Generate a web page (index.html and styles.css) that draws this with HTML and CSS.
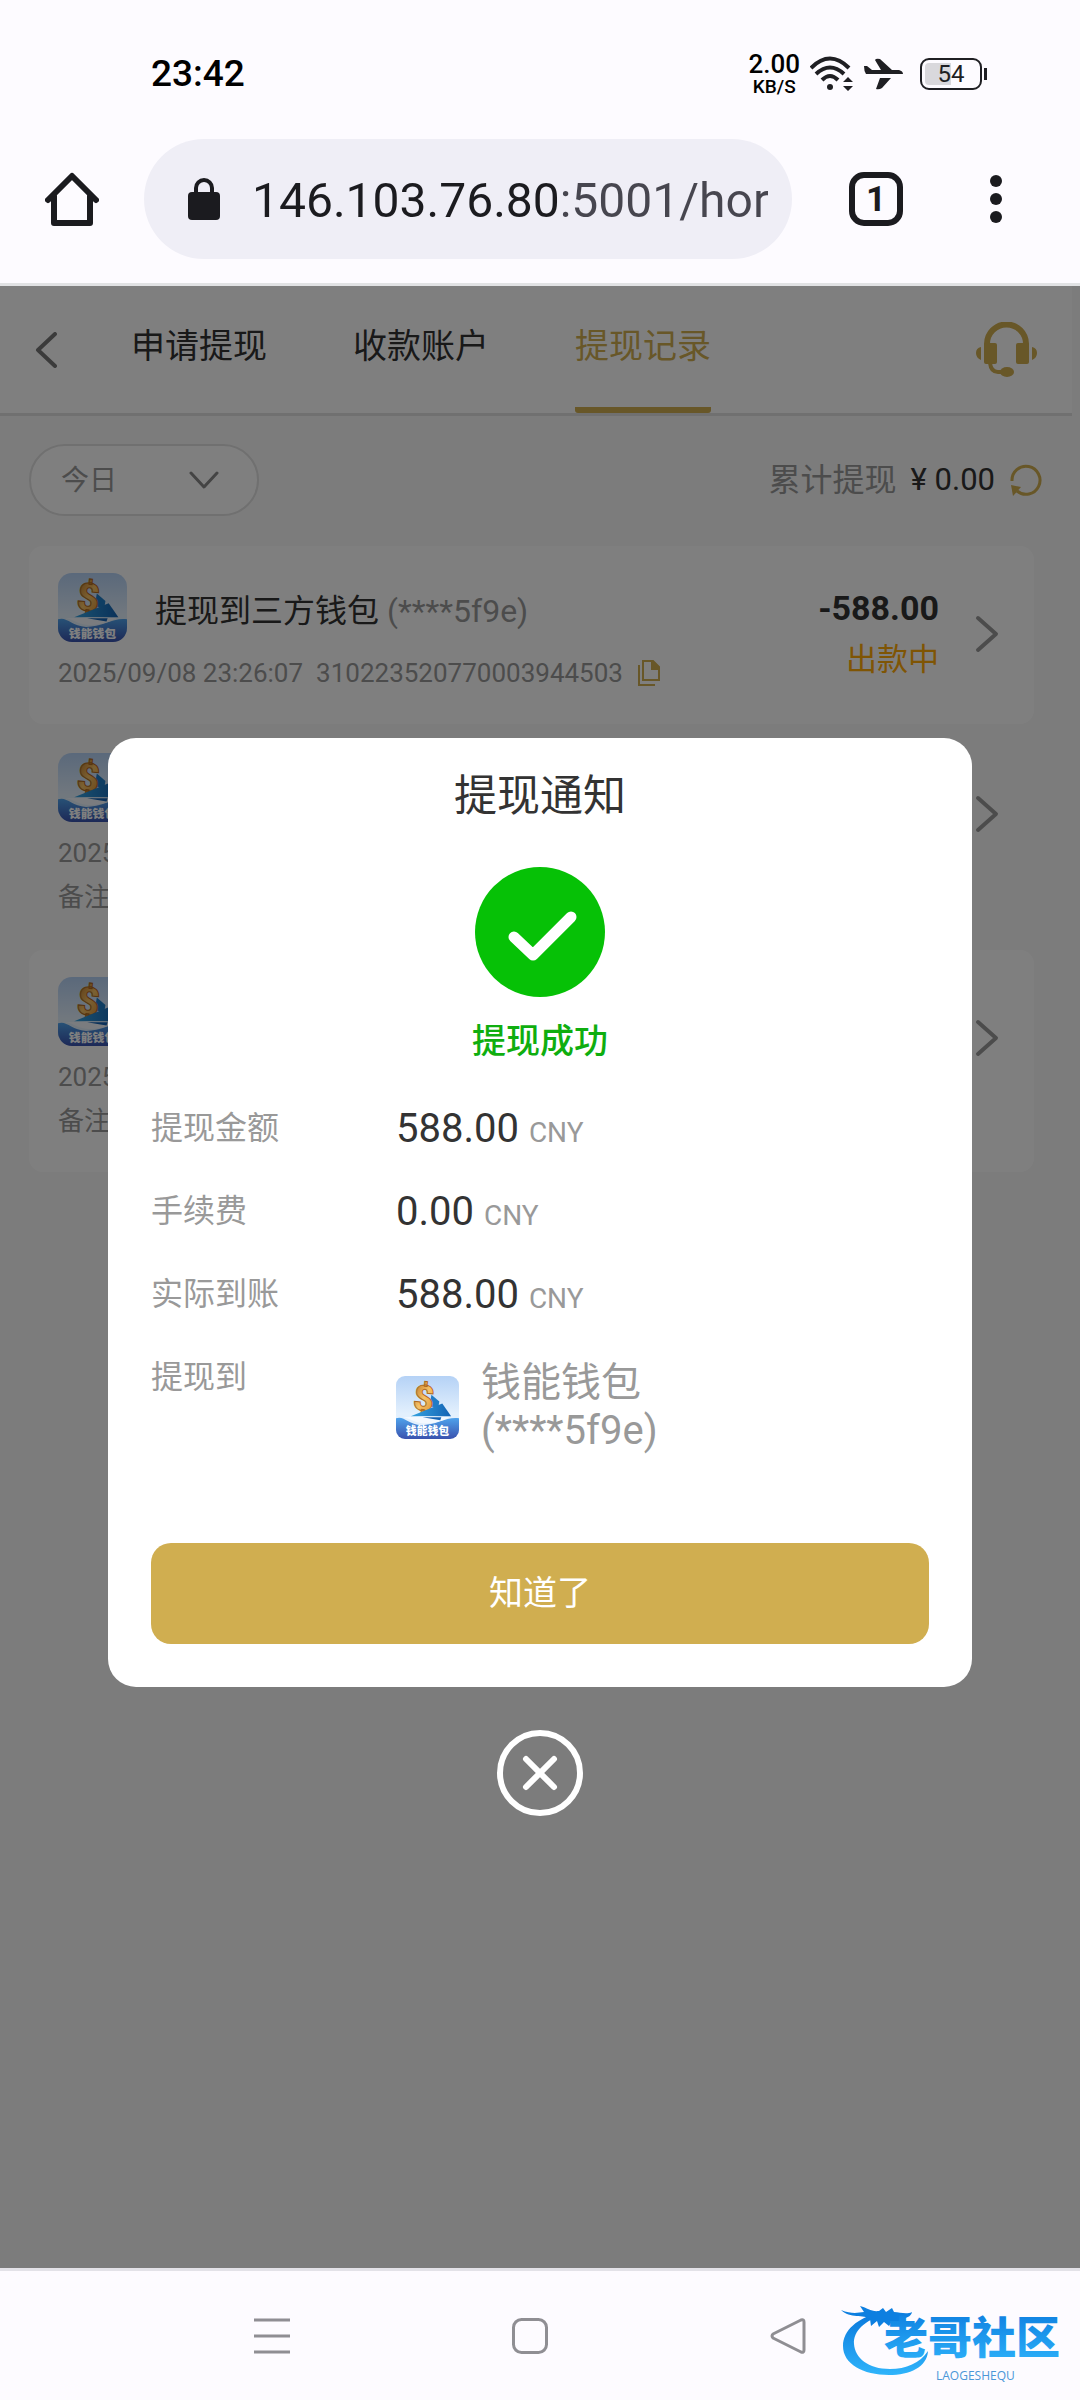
FILE: index.html
```html
<!DOCTYPE html>
<html lang="zh-CN">
<head>
  <meta charset="UTF-8" />
  <meta name="viewport" content="width=device-width, initial-scale=1" />
  <title>提现记录</title>
  <link rel="stylesheet" href="styles.css">
</head>

<body>

  <!-- Shared symbols -->
  <svg class="symbols" width="0" height="0" aria-hidden="true">
    <defs>
      <linearGradient id="skyFill" x1="0" y1="0" x2="0" y2="1">
        <stop offset="0" stop-color="#b5d2f6" />
        <stop offset="0.6" stop-color="#e3f0fd" />
      </linearGradient>
      <linearGradient id="waveFill" x1="0" y1="0" x2="0" y2="1">
        <stop offset="0" stop-color="#4fa3ec" />
        <stop offset="1" stop-color="#3a52ae" />
      </linearGradient>
      <linearGradient id="goldFill" x1="0" y1="0" x2="1" y2="1">
        <stop offset="0" stop-color="#b5691c" />
        <stop offset="0.5" stop-color="#f6c266" />
        <stop offset="1" stop-color="#d8892c" />
      </linearGradient>
      <linearGradient id="sailFill" x1="0" y1="0" x2="1" y2="0">
        <stop offset="0" stop-color="#35a3e0" />
        <stop offset="1" stop-color="#1463b4" />
      </linearGradient>
      <linearGradient id="logoFill" x1="0" y1="0" x2="0" y2="1">
        <stop offset="0" stop-color="#0a78dc" />
        <stop offset="1" stop-color="#2fb4fb" />
      </linearGradient>
    </defs>
    <symbol id="walletSky" viewBox="0 0 64 64">
      <path d="M0 0h64v64H0z" fill="url(#skyFill)" />
      <path d="M36 19l8 7-1 6-9-1z" fill="#1f7cc6" />
    </symbol>
    <symbol id="walletSea" viewBox="0 0 64 64">
      <path d="M15 41l32-13 9 13z" fill="url(#sailFill)" />
      <path d="M0 43c8-3 12 6 26 7 15 0 26-9 38-7v21H0z" fill="url(#waveFill)" />
      <path d="M7 42c18-1 36-1 47 0-9 5-18 7-28 6-8-1-12-5-19-6z" fill="#f4f9ff" />
      <path d="M27 42h19l-1 3z" fill="#1463b4" />
    </symbol>
    <symbol id="chevronRight" viewBox="0 0 24 38">
      <path d="M3 3l18 16L3 35" fill="none" stroke="currentColor" stroke-width="4" stroke-linecap="round" stroke-linejoin="round" />
    </symbol>
  </svg>

  <!-- Status Bar -->
  <div class="status-bar">
    <span class="clock">23:42</span>
    <div class="status-icons">
      <div class="speed"><span class="rate">2.00</span><span class="rate-unit">KB/S</span></div>
      <svg class="wifi" viewBox="0 0 44 36" width="44" height="36">
        <g fill="none" stroke="#1f1f23" stroke-width="4">
          <path d="M1 12Q20-7 39 12" />
          <path d="M6 18Q20 5 34 18" />
          <path d="M12 24Q20 16 28 24" />
        </g>
        <circle cx="20" cy="31" r="3" fill="#1f1f23" />
        <path d="M33 26l5-5 5 5zM33 30l5 5 5-5z" fill="#1f1f23" />
      </svg>
      <svg class="plane" viewBox="0 0 40 32" width="40" height="32">
        <path d="M0 8h3l5 4h9L11 2q1-2 5-1l12 11h7q4 1 4 4H2q-2-3-2-8zM16 20h11l-9 10q-3 2-6 1z" fill="#1f1f23" />
      </svg>
      <div class="battery"><span>54</span></div>
    </div>
  </div>

  <!-- Browser Toolbar -->
  <header class="toolbar">
    <button class="tool" type="button" aria-label="主页">
      <svg viewBox="0 0 54 54" width="54" height="54">
        <path d="M3 28L27 4l24 24M9 24v27h36V24" fill="none" stroke="#1b1b1f" stroke-width="6" stroke-linecap="round" stroke-linejoin="round" />
      </svg>
    </button>
    <label class="address">
      <svg viewBox="0 0 32 42" width="32" height="42" aria-hidden="true">
        <path d="M8 16v-6a8 8 0 0 1 16 0v6" fill="none" stroke="#1b1b1f" stroke-width="4" />
        <rect y="14" width="32" height="28" rx="4" fill="#1b1b1f" />
      </svg>
      <input class="url" type="text" value="146.103.76.80:5001/hor" aria-label="网址" />
    </label>
    <button class="tab-count" type="button" aria-label="标签页">1</button>
    <button class="tool more" type="button" aria-label="更多">
      <svg viewBox="0 0 12 48" width="12" height="48">
        <g fill="#1b1b1f"><circle cx="6" cy="6" r="6" /><circle cx="6" cy="24" r="6" /><circle cx="6" cy="42" r="6" /></g>
      </svg>
    </button>
  </header>

  <main class="page">

    <!-- Tabs -->
    <nav class="tabs">
      <a class="back" href="#" aria-label="返回">
        <svg viewBox="0 0 22 36" width="22" height="36">
          <path d="M20 2L3 18l17 16" fill="none" stroke="#777" stroke-width="4" stroke-linecap="round" stroke-linejoin="round" />
        </svg>
      </a>
      <a class="tab" href="#">申请提现</a>
      <a class="tab" href="#">收款账户</a>
      <a class="tab active" href="#">提现记录</a>
      <a class="service" href="#" aria-label="客服">
        <svg viewBox="0 0 62 56" width="62" height="56">
          <path d="M11 24v-2a19 19 0 0 1 39 0v2" fill="none" stroke="#d0ae50" stroke-width="6" />
          <rect x="8" y="21" width="13" height="21" rx="2" fill="#d0ae50" />
          <rect x="40" y="21" width="13" height="21" rx="2" fill="#d0ae50" />
          <path d="M5 25v13Q0 36 0 31t5-6zM56 25v13q5-2 5-7t-5-6z" fill="#d0ae50" />
          <path d="M14 41q1 9 8 9h8" fill="none" stroke="#d0ae50" stroke-width="4" />
          <ellipse cx="31" cy="50" rx="7" ry="5" fill="#d0ae50" />
        </svg>
      </a>
    </nav>

    <!-- Filter -->
    <div class="filter">
      <div class="picker">
        <select aria-label="日期"><option>今日</option></select>
        <svg viewBox="0 0 30 20" width="30" height="20" aria-hidden="true">
          <path d="M2 3l13 14L28 3" fill="none" stroke="#888" stroke-width="3" stroke-linecap="round" stroke-linejoin="round" />
        </svg>
      </div>
      <div class="total">
        <span class="total-label">累计提现</span>
        <span class="total-value">¥ 0.00</span>
        <button class="refresh" type="button" aria-label="刷新">
          <svg viewBox="0 0 32 32" width="32" height="32">
            <path d="M2 17A14 14 0 1 1 7 27" fill="none" stroke="#d0ae50" stroke-width="3" />
            <path d="M1 21l10 2-8 9z" fill="#d0ae50" />
          </svg>
        </button>
      </div>
    </div>

    <!-- Records -->
    <ul class="records">
      <li class="record">
        <div class="record-main">
          <div class="record-info">
            <div class="record-title">
              <svg class="wallet" viewBox="0 0 64 64">
                <use href="#walletSky" />
                <text class="coin" x="18" y="35" transform="rotate(6 28 20)">$</text>
                <use href="#walletSea" />
                <text class="wallet-name" x="32" y="60" text-anchor="middle">钱能钱包</text>
              </svg>
              <span>提现到三方钱包 <span class="muted">(****5f9e)</span></span>
            </div>
            <div class="record-meta">
              <span>2025/09/08 23:26:07</span>
              <span class="order">310223520770003944503</span>
              <button class="copy" type="button" aria-label="复制">
                <svg viewBox="0 0 22 28" width="22" height="28">
                  <path d="M5 2h10l6 6v13H5zM1 6v20h16" fill="none" stroke="#d0ae50" stroke-width="2" />
                  <path d="M13 2h2l6 6v3h-8z" fill="#d0ae50" />
                </svg>
              </button>
            </div>
          </div>
          <div class="record-amount">
            <strong>-588.00</strong>
            <span class="pending">出款中</span>
          </div>
          <svg class="chevron"><use href="#chevronRight" /></svg>
        </div>
      </li>
      <li class="record plain">
        <div class="record-main">
          <div class="record-info">
            <div class="record-title">
              <svg class="wallet" viewBox="0 0 64 64">
                <use href="#walletSky" />
                <text class="coin" x="18" y="35" transform="rotate(6 28 20)">$</text>
                <use href="#walletSea" />
                <text class="wallet-name" x="32" y="60" text-anchor="middle">钱能钱包</text>
              </svg>
            </div>
            <div class="record-meta"><span>2025</span></div>
          </div>
          <svg class="chevron"><use href="#chevronRight" /></svg>
        </div>
        <div class="remark">备注</div>
      </li>
      <li class="record">
        <div class="record-main">
          <div class="record-info">
            <div class="record-title">
              <svg class="wallet" viewBox="0 0 64 64">
                <use href="#walletSky" />
                <text class="coin" x="18" y="35" transform="rotate(6 28 20)">$</text>
                <use href="#walletSea" />
                <text class="wallet-name" x="32" y="60" text-anchor="middle">钱能钱包</text>
              </svg>
            </div>
            <div class="record-meta"><span>2025</span></div>
          </div>
          <svg class="chevron"><use href="#chevronRight" /></svg>
        </div>
        <div class="remark">备注</div>
      </li>
    </ul>

    <!-- Withdrawal Notice -->
    <div class="overlay">
      <section class="notice" role="dialog" aria-labelledby="noticeTitle">
        <h2 id="noticeTitle">提现通知</h2>
        <svg class="success-icon" viewBox="0 0 130 130" width="130" height="130">
          <circle cx="65" cy="65" r="65" fill="#06c106" />
          <path d="M39 70l19 18 38-38" fill="none" stroke="#fff" stroke-width="11" stroke-linecap="round" stroke-linejoin="round" />
        </svg>
        <p class="success-text">提现成功</p>
        <dl class="summary">
          <dt>提现金额</dt><dd>588.00 <small>CNY</small></dd>
          <dt>手续费</dt><dd>0.00 <small>CNY</small></dd>
          <dt>实际到账</dt><dd>588.00 <small>CNY</small></dd>
          <dt>提现到</dt>
          <dd class="target">
            <svg class="wallet small" viewBox="0 0 64 64">
              <use href="#walletSky" />
              <text class="coin" x="18" y="35" transform="rotate(6 28 20)">$</text>
              <use href="#walletSea" />
              <text class="wallet-name" x="32" y="60" text-anchor="middle">钱能钱包</text>
            </svg>
            <span>钱能钱包<br>(****5f9e)</span>
          </dd>
        </dl>
        <button class="confirm" type="button">知道了</button>
      </section>
      <button class="close" type="button" aria-label="关闭">
        <svg viewBox="0 0 36 36" width="36" height="36">
          <path d="M4 4l28 28M32 4L4 32" stroke="#fff" stroke-width="6" stroke-linecap="round" />
        </svg>
      </button>
    </div>
  </main>

  <!-- System Navigation -->
  <footer class="system-nav">
    <button type="button" aria-label="最近任务">
      <svg viewBox="0 0 36 36" width="36" height="36"><path d="M0 2h36M0 18h36M0 34h36" stroke="#8f8e93" stroke-width="3" /></svg>
    </button>
    <button type="button" aria-label="桌面">
      <svg viewBox="0 0 36 36" width="36" height="36"><rect x="1.5" y="1.5" width="33" height="33" rx="8" fill="none" stroke="#8f8e93" stroke-width="3" /></svg>
    </button>
    <button type="button" aria-label="返回上一页">
      <svg viewBox="0 0 36 36" width="36" height="36"><path d="M31 2L3 16q-2 2 0 4l28 14q3 1 3-2V4q0-3-3-2z" fill="none" stroke="#8f8e93" stroke-width="3" stroke-linejoin="round" /></svg>
    </button>
    <svg class="community" viewBox="0 0 228 90" width="228" height="90" role="img" aria-label="老哥社区">
      <path d="M38 15C18 20 3 32 3 48c0 18 20 29 46 29 21 0 38-8 39-24-8 12-22 18-38 18-22 0-35-11-36-25C13 33 25 22 44 17z" fill="url(#logoFill)" />
      <path d="M1 12c10 4 16 3 23 2l-4-6c8 2 11 6 19 5l4-3 3 4 6-4 2 4c6 0 12 3 18 0-1 5-6 6-12 7l9 4-7 3-10-5-3 5-5-4-5 5-2-6-6 5-1-7c-6-5-20 0-29-9z" fill="#0d7fe0" />
      <text class="community-name" x="44" y="56">老哥社区</text>
      <text class="community-sub" x="96" y="82">LAOGESHEQU</text>
    </svg>
  </footer>

</body>
</html>
```
FILE: styles.css
```css
/* — Theme Variables — */
:root {
  --chrome-bg: #fdfbff;
  --chrome-ink: #1b1b1f;
  --gold: #d0ae50;
  --text: #333;
  --muted: #999;
  --line: #e0e0e0;
}

/* — Base Reset & Body — */
* { box-sizing: border-box; margin: 0; padding: 0; }
body {
  font-family: Roboto, "Noto Sans CJK SC", sans-serif;
  background: var(--chrome-bg);
  color: var(--text);
  display: flex; flex-direction: column;
  min-height: 100vh;
}
button { border: 0; background: none; font: inherit; color: inherit; cursor: pointer; }
a { color: inherit; text-decoration: none; }
svg { display: block; flex: none; }
.symbols { position: absolute; }

/* — Status Bar — */
.status-bar {
  display: flex; justify-content: space-between; align-items: center;
  padding: 48px 98px 40px 151px;
  color: #000;
}
.clock { font-size: 37px; line-height: 51px; font-weight: 500; }
.status-icons { display: flex; align-items: center; gap: 10px; }
.speed { display: flex; flex-direction: column; align-items: center; }
.rate { font-size: 26px; line-height: 26px; font-weight: 500; }
.rate-unit { font-size: 19px; line-height: 19px; font-weight: 500; }
.battery {
  position: relative;
  width: 62px; height: 32px;
  margin-left: 6px;
  border: 2px solid #1f1f23; border-radius: 9px;
  background: linear-gradient(90deg, #d9d8dc 50%, transparent 50%) content-box;
  padding: 3px;
}
.battery span {
  display: block;
  font-size: 24px; line-height: 22px; text-align: center; color: #1f1f23;
}
.battery::after {
  content: "";
  position: absolute; top: 8px; right: -7px;
  width: 3px; height: 12px;
  background: #1f1f23;
}

/* — Browser Toolbar — */
.toolbar {
  display: flex; align-items: center;
  padding: 0 78px 24px 45px;
  border-bottom: 3px solid #e1e2e4;
}
.address {
  flex: 1; min-width: 0;
  display: flex; align-items: center; gap: 32px;
  height: 120px;
  margin: 0 57px 0 45px; padding: 0 24px 0 44px;
  border-radius: 60px;
  background: #efeef6;
}
/* host is darker than port and path */
.url {
  flex: 1; min-width: 0;
  padding-top: 4px;
  border: 0; outline: 0;
  font: 48px/60px Roboto, sans-serif;
  color: transparent;
  background: linear-gradient(90deg, var(--chrome-ink) 309px, #47464f 309px);
  -webkit-background-clip: text; background-clip: text;
}
.tab-count {
  width: 54px; height: 54px;
  border: 6px solid var(--chrome-ink); border-radius: 15px;
  font-size: 35px; line-height: 44px; font-weight: 700; color: var(--chrome-ink);
}
.more { margin-left: 87px; }

/* — Page — */
.page {
  flex: 1;
  position: relative;
  padding-right: 8px;
  background: #f8f8f8;
}
.tabs {
  display: flex; align-items: center; gap: 86px;
  padding-left: 35px;
  background: #fff;
  border-bottom: 3px solid var(--line);
}
.back { margin-right: -12px; }
.tab {
  font-size: 34px; line-height: 121px;
  border-bottom: 6px solid transparent;
}
.tab.active { color: var(--gold); border-color: var(--gold); border-radius: 3px; }
.service { margin-left: auto; margin-right: 34px; }

/* — Filter — */
.filter {
  display: flex; justify-content: space-between; align-items: center;
  padding: 28px 30px 30px 29px;
}
.picker {
  display: flex; align-items: center;
  width: 230px; height: 72px;
  padding: 0 38px 0 30px;
  border: 2px solid var(--line); border-radius: 36px;
  background: #fff;
}
.picker select {
  flex: 1;
  padding-top: 2px;
  appearance: none; border: 0; background: none;
  font: 28px/40px Roboto, "Noto Sans CJK SC", sans-serif; color: var(--muted);
}
.total { display: flex; align-items: center; font-size: 31px; line-height: 48px; }
.total-label { color: var(--muted); font-size: 32px; margin-right: 14px; }
.refresh { margin-left: 15px; }

/* — Records — */
.records {
  list-style: none;
  display: flex; flex-direction: column; gap: 2px;
  padding: 0 38px 0 29px;
}
.record { padding: 27px 29px 29px; border-radius: 14px; background: #fff; }
.record.plain { background: none; }
.record-main { display: flex; align-items: center; }
.record-info { flex: 1; }
.record-title { display: flex; align-items: center; gap: 28px; font-size: 32px; }
.record-meta {
  display: flex; align-items: center;
  margin-top: 9px;
  font-size: 26px; line-height: 44px; color: var(--muted);
}
.order { margin: 0 15px 0 13px; }
.record-amount {
  display: flex; flex-direction: column; align-items: flex-end;
  font-size: 34px; line-height: 52px;
}
.pending { font-size: 31px; color: #ffaa09; }
.chevron { width: 24px; height: 38px; margin: 0 6px 0 36px; color: #999; }
.remark { font-size: 26px; line-height: 44px; color: var(--muted); }
.muted { color: var(--muted); }

.wallet { width: 69px; height: 69px; border-radius: 14px; }
.wallet.small { width: 63px; height: 63px; border-radius: 9px; }
.coin {
  font: 900 36px Roboto, sans-serif;
  fill: url(#goldFill); stroke: #b06a20; stroke-width: 1px;
}
.wallet-name { font: 900 11px "Noto Sans CJK SC", sans-serif; fill: #fff; }

/* — Withdrawal Notice — */
.overlay {
  position: absolute; inset: 0;
  display: flex; flex-direction: column; justify-content: center; align-items: center;
  background: rgba(0,0,0,0.5);
}
.notice {
  width: 80%;
  padding: 0 43px 43px;
  border-radius: 28px;
  background: #fff;
}
.notice h2 { font-size: 43px; line-height: 116px; font-weight: 400; text-align: center; }
.success-icon { margin: 13px auto 20px; }
.success-text {
  font-size: 34px; line-height: 48px; font-weight: 500;
  text-align: center; color: #0fae0f;
}
.summary {
  display: grid; grid-template-columns: 245px 1fr;
  margin-top: 22px;
  line-height: 83px;
}
.summary dt { font-size: 32px; color: var(--muted); }
.summary dd { font-size: 40px; }
.summary small { font-size: 28px; line-height: 28px; color: var(--muted); }
.summary .target {
  display: flex; align-items: center; gap: 22px;
  margin-top: 23px;
  line-height: 48px; color: var(--muted);
}
.confirm {
  display: block; width: 100%;
  margin-top: 88px;
  border-radius: 20px;
  font-size: 34px; line-height: 101px;
  color: #fff; background: var(--gold);
}
.close {
  display: flex; justify-content: center; align-items: center;
  width: 86px; height: 86px;
  margin-top: 43px;
  border: 6px solid #fff; border-radius: 50%;
}

/* — System Navigation — */
.system-nav {
  position: relative;
  display: flex; justify-content: space-between; align-items: center;
  height: 132px;
  padding: 0 25.4% 0 23.5%;
  border-top: 3px solid #e3e2e8;
}
.community { position: absolute; right: 12px; bottom: 12px; }
.community-name { font: 900 44px "Noto Sans CJK SC", sans-serif; fill: url(#logoFill); }
.community-sub { font: 12px "Open Sans", sans-serif; fill: #4b97d8; }
```
